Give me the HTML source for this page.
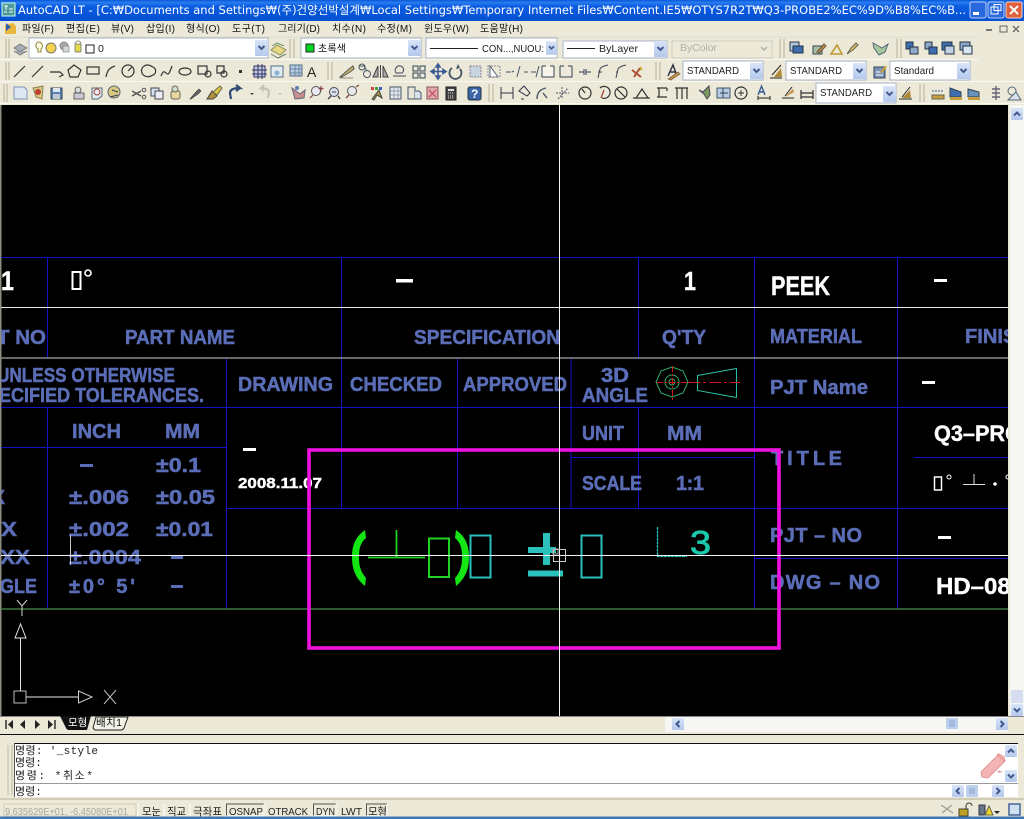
<!DOCTYPE html>
<html><head><meta charset="utf-8"><style>
html,body{margin:0;padding:0;background:#ece9d8;width:1024px;height:819px;overflow:hidden}
svg{display:block}
text{font-family:"Liberation Sans","Noto Sans CJK KR",sans-serif}
.b{font-weight:bold;fill:#5a6db6;font-size:20px;stroke:#5a6db6;stroke-width:.5px}
.w{font-weight:bold;fill:#fff;stroke:#fff;stroke-width:.4px}
.u{font-size:10px;fill:#111}
.c{font-family:"Liberation Mono","Noto Sans CJK KR",monospace;font-size:11px;fill:#222}
.s{font-size:10.5px;fill:#222}
.bl{stroke:#1414c4;stroke-width:1;fill:none}
.tk{fill:none;stroke:#333;stroke-width:1.2}
</style></head><body>
<svg width="1024" height="819" viewBox="0 0 1024 819" xmlns="http://www.w3.org/2000/svg">
<defs>
<linearGradient id="tg" x1="0" y1="0" x2="0" y2="1"><stop offset="0" stop-color="#0a58d8"/><stop offset=".12" stop-color="#2a7cf0"/><stop offset=".3" stop-color="#0a5ce2"/><stop offset="1" stop-color="#0450d0"/></linearGradient>
<linearGradient id="ar" x1="0" y1="0" x2="0" y2="1"><stop offset="0" stop-color="#d8e4f8"/><stop offset="1" stop-color="#b4c8ec"/></linearGradient>
<symbol id="dn" viewBox="0 0 13 16" overflow="visible"><rect x="0" y="0" width="13" height="16" rx="1" fill="url(#ar)"/><path d="M3.5 6l3 3 3-3" fill="none" stroke="#41598c" stroke-width="2"/></symbol>
<symbol id="up" viewBox="0 0 12 12"><rect width="12" height="12" rx="1" fill="url(#ar)"/><path d="M3 7.500l3-3 3 3" fill="none" stroke="#41598c" stroke-width="2"/></symbol>
<symbol id="dw" viewBox="0 0 12 12"><rect width="12" height="12" rx="1" fill="url(#ar)"/><path d="M3 4.500l3 3 3-3" fill="none" stroke="#41598c" stroke-width="2"/></symbol>
<symbol id="lf" viewBox="0 0 12 12"><rect width="12" height="12" rx="1" fill="url(#ar)"/><path d="M7.500 3l-3 3 3 3" fill="none" stroke="#41598c" stroke-width="2"/></symbol>
<symbol id="rt" viewBox="0 0 12 12"><rect width="12" height="12" rx="1" fill="url(#ar)"/><path d="M4.500 3l3 3-3 3" fill="none" stroke="#41598c" stroke-width="2"/></symbol>
<clipPath id="dc"><rect x="1" y="105" width="1007" height="611"/></clipPath>
</defs>

<!-- base -->
<rect width="1024" height="819" fill="#ece9d8"/>
<!-- title bar -->
<rect width="1024" height="21" fill="url(#tg)"/>
<rect x="2" y="3" width="13" height="13" fill="#4f9a9a" stroke="#cfe" stroke-width="1"/>
<path d="M4 6h4M6 6v4M9 9h4M9 12h4M4 12h3" stroke="#fff" stroke-width="1"/>
<text x="18" y="14" font-size="11.5" fill="#fff" textLength="948" lengthAdjust="spacingAndGlyphs" style="font-family:'DejaVu Sans','Noto Sans CJK KR',sans-serif">AutoCAD LT - [C:₩Documents and Settings₩(주)건양선박설계₩Local Settings₩Temporary Internet Files₩Content.IE5₩OTYS7R2T₩Q3-PROBE2%EC%9D%B8%EC%B...</text>
<rect x="970" y="2" width="16" height="16" rx="2" fill="#2a68e0" stroke="#b8d0f8"/><rect x="973" y="12" width="6" height="3" fill="#fff"/>
<rect x="988" y="2" width="16" height="16" rx="2" fill="#2a68e0" stroke="#b8d0f8"/><rect x="991" y="7" width="7" height="7" fill="none" stroke="#fff"/><rect x="994" y="4.500" width="7" height="6" fill="none" stroke="#fff"/>
<rect x="1006" y="2" width="16" height="16" rx="2" fill="#e0603c" stroke="#f8d0c0"/><path d="M1010 6l8 8M1018 6l-8 8" stroke="#fff" stroke-width="2"/>

<!-- menu -->
<path d="M5 25l8-2 3 3v8H5z" fill="#e8b83c"/><path d="M6 23l5 4-5 4z" fill="#3060b0"/>
<g class="u" font-size="10">
<text x="22" y="32" class="u" textLength="32">파일(F)</text>
<text x="66" y="32" class="u" textLength="34">편집(E)</text>
<text x="111" y="32" class="u" textLength="23">뷰(V)</text>
<text x="146" y="32" class="u" textLength="29">삽입(I)</text>
<text x="186" y="32" class="u" textLength="34">형식(O)</text>
<text x="232" y="32" class="u" textLength="33">도구(T)</text>
<text x="278" y="32" class="u" textLength="42">그리기(D)</text>
<text x="332" y="32" class="u" textLength="34">치수(N)</text>
<text x="377" y="32" class="u" textLength="35">수정(M)</text>
<text x="424" y="32" class="u" textLength="45">윈도우(W)</text>
<text x="480" y="32" class="u" textLength="43">도움말(H)</text>
</g>
<rect x="986" y="29" width="6" height="2" fill="#777"/><rect x="1000" y="26" width="7" height="6" fill="none" stroke="#666"/><path d="M1013 26l6 6M1019 26l-6 6" stroke="#666" stroke-width="1.300"/>

<!-- toolbar separators -->
<path d="M0 36.500H978M0 59.500H978M0 81.500H1024M0 103.500H1024" stroke="#f9f8f1"/>
<path d="M0 37H978" stroke="#d8d4c0"/>
<path d="M6 39v19M9 39v19M6 62v18M9 62v18M4 84v18M7 84v18M290 39v19M294 39v19M780 39v19M784 39v19M897 39v19M901 39v19M328 62v18M332 62v18M656 62v18M660 62v18M489 84v18M493 84v18M920 84v18M924 84v18" stroke="#bdb9a4" stroke-width="1.200"/>

<!-- Toolbar 1 -->
<path d="M14 48l6-4 7 4-7 4zM14 51l6 4 7-4" fill="#a6adb4" stroke="#777" stroke-width=".8"/>
<rect x="29" y="38" width="239" height="20" fill="#fff" stroke="#a8b4c8"/>
<use href="#dn" x="255" y="40" width="13" height="16"/>
<path d="M38 42a4 4 0 0 1 3 7v3h-3v-3a4 4 0 0 1 0-7z" fill="#fffbe0" stroke="#8a8a40"/>
<circle cx="51" cy="48" r="5" fill="#f4d44c" stroke="#777"/>
<circle cx="64" cy="46" r="4" fill="#aaa" stroke="#888"/><rect x="63" y="46" width="6" height="6" fill="#d0d8d8" stroke="#888" stroke-width=".7"/>
<rect x="75" y="44" width="6" height="8" rx="1" fill="#e6d84c" stroke="#887"/><path d="M75 44a3 3 0 0 1 6 0" fill="none" stroke="#887"/>
<rect x="86" y="45" width="8" height="8" fill="#fff" stroke="#222"/>
<text x="98" y="52" class="s" font-size="11">0</text>
<path d="M271 50l6-5 9 5-6 5z" fill="#e8d880" stroke="#8a9060"/><path d="M272 46l5-3 7 3" fill="none" stroke="#6a9060"/><path d="M271 54l7 4 8-4" fill="none" stroke="#6a8060"/>

<rect x="301" y="38" width="120" height="20" fill="#fff" stroke="#a8b4c8"/>
<rect x="306" y="44" width="8" height="8" fill="#00d820" stroke="#222"/>
<text x="318" y="52" class="u" textLength="28">초록색</text>
<use href="#dn" x="408" y="40" width="13" height="16"/>

<rect x="426" y="38" width="131" height="20" fill="#fff" stroke="#a8b4c8"/>
<path d="M430 48.500H478" stroke="#222"/>
<text x="482" y="52" class="s" textLength="62" lengthAdjust="spacingAndGlyphs">CON...,NUOU:</text>
<use href="#dn" x="546" y="40" width="11" height="16"/>

<rect x="563" y="41" width="104" height="17" fill="#fff" stroke="#a8b4c8"/>
<path d="M567 48.500H595" stroke="#222"/>
<text x="599" y="52" class="s" textLength="39" lengthAdjust="spacingAndGlyphs">ByLayer</text>
<use href="#dn" x="654" y="41" width="13" height="16"/>

<rect x="672" y="41" width="100" height="17" fill="#ece9d8" stroke="#cfcdbe"/>
<text x="680" y="51" class="s" style="fill:#b0b0a4" textLength="37">ByColor</text>
<path d="M761 47l3 3 3-3" fill="none" stroke="#b0b0a4" stroke-width="1.500"/>

<rect x="790" y="42" width="9" height="9" fill="#b0c8e0" stroke="#334"/><rect x="793" y="46" width="10" height="7" fill="#3f6eb0" stroke="#234"/>
<rect x="813" y="46" width="9" height="8" fill="#a8c0a0" stroke="#345"/><path d="M817 52l7-8 2 2-7 7z" fill="#c89040" stroke="#654"/>
<path d="M831 54l6-9 5 9z" fill="none" stroke="#c09a30" stroke-width="1.600"/><path d="M847 54l4-6 5-5 2 2-5 5z" fill="#d8b860" stroke="#665"/>
<path d="M873 43l9 5 6-4-3 8-6 3-5-7z" fill="#a8c8a0" stroke="#567"/>
<rect x="906" y="42" width="7" height="7" fill="#3f6eb0" stroke="#234"/><rect x="910" y="47" width="8" height="7" fill="#90a8c8" stroke="#234"/>
<rect x="925" y="42" width="7" height="7" fill="#90a8c8" stroke="#234"/><rect x="929" y="47" width="8" height="7" fill="#3f6eb0" stroke="#234"/>
<rect x="942" y="42" width="10" height="8" fill="#3f6eb0" stroke="#234"/><rect x="945" y="46" width="9" height="8" fill="#c0d0e0" stroke="#234"/>
<rect x="960" y="42" width="10" height="8" fill="#90a8c8" stroke="#234"/><rect x="963" y="46" width="9" height="8" fill="#d8e4f0" stroke="#234"/>

<!-- Toolbar 2 -->
<g class="tk">
<path d="M14 77l11-11M32 77l11-11M50 72h10l3 3-4 2"/>
<path d="M74 65l7 5-3 7h-8l-2-7z"/>
<rect x="87" y="67" width="12" height="7"/>
<path d="M106 77c1-6 3-9 9-11"/>
<circle cx="128" cy="71" r="6"/><path d="M128 71l4-4"/>
<path d="M143 67c4-4 8-1 10 0 4 2 3 7 0 8-3 2-6 2-8 1-3-1-5-6-2-9z"/>
<path d="M161 76c2-5 3-5 5-3s3 2 6-7"/>
<ellipse cx="185" cy="71.500" rx="6" ry="3.500"/>
<rect x="198" y="66" width="9" height="8"/><circle cx="208" cy="74" r="3"/>
<path d="M217 66h7v7h-7z"/><circle cx="224" cy="74" r="3"/>
</g>
<rect x="239" y="70" width="3" height="3" fill="#333"/>
<rect x="254" y="66" width="11" height="11" fill="#c0ccdc" stroke="#336"/><path d="M252 70h15M252 74h15M258 64v15M262 64v15" stroke="#336"/>
<rect x="271" y="66" width="12" height="11" fill="#e0ecf0" stroke="#58708c"/><circle cx="277" cy="73" r="2.500" fill="#90b0d0"/>
<rect x="290" y="65" width="12" height="11" fill="#b8cce4" stroke="#58708c"/><path d="M290 69h12M290 73h12M295 65v11M299 65v11" stroke="#58708c" stroke-width=".7"/>
<text x="307" y="77" font-size="14" fill="#222" style="font-family:'Liberation Sans'">A</text>

<path d="M340 77l9-8 4-3 1 3-4 3-8 5z" fill="#c8b870" stroke="#555"/><path d="M340 78h13" stroke="#888"/>
<circle cx="362" cy="67" r="3" fill="none" stroke="#456"/><circle cx="367" cy="74" r="3.500" fill="none" stroke="#456"/><path d="M359 66h5l3 5" stroke="#456" fill="none"/>
<path d="M378 66v11h-5zM383 66v11h5zM380.500 65v13" fill="#aaa" stroke="#444"/>
<path d="M396 68a4 4 0 1 1 6 5h-6a4 4 0 0 1 0-5zM393 76h13" fill="none" stroke="#445"/>
<rect x="413" y="66" width="5" height="5" fill="none" stroke="#345"/><rect x="420" y="66" width="5" height="5" fill="none" stroke="#345"/><rect x="413" y="73" width="5" height="5" fill="none" stroke="#345"/><rect x="420" y="73" width="5" height="5" fill="none" stroke="#345"/>
<path d="M438 65v13M432 71.500h13M438 64l-2 3h4zM438 79l-2-3h4zM431 71.500l3-2v4zM446 71.500l-3-2v4z" stroke="#3a5a94" fill="#3a5a94" stroke-width="1.600"/>
<path d="M452 68a6 6 0 1 0 8 1" fill="none" stroke="#456" stroke-width="1.800"/><path d="M458 64l2 4-4 1z" fill="#456"/>
<rect x="470" y="66" width="11" height="11" fill="#c8d4e0" stroke="#889" stroke-dasharray="2 1"/>
<path d="M490 66v11h8z" fill="#fff" stroke="#567"/><rect x="488" y="66" width="12" height="11" fill="none" stroke="#889" stroke-dasharray="2 1"/>
<path d="M506 72h5M514 71l-2 1M520 66l-3 11" stroke="#456" fill="none"/><path d="M524 72h4M531 72h5M539 66l-3 11" stroke="#456" fill="none"/>
<path d="M542 66v11h12v-11" fill="#f8f4ea" stroke="#345"/><path d="M542 66h4M550 66h4" stroke="#345"/>
<path d="M560 66v11h12v-11M560 66h4M568 66h4" fill="none" stroke="#345"/>
<path d="M579 72h5M591 72h-5M584 69v6M586 69v6" stroke="#345" fill="none"/>
<path d="M598 78l2-9c1-2 3-3 8-4M598 72h4" fill="none" stroke="#445"/>
<path d="M616 78l2-9c1-2 3-3 8-4M616 72h2" fill="none" stroke="#445"/>
<path d="M634 77l6-9M632 70l9 7" stroke="#b05030" stroke-width="2"/><path d="M640 66l3 3-3 2" fill="#c8b040"/>

<path d="M668 76l5-11 4 11M670 72h6" fill="none" stroke="#334" stroke-width="1.500"/><path d="M668 79l10-7 2 2-9 6z" fill="#c09040" stroke="#654" stroke-width=".6"/>
<rect x="683" y="61" width="80" height="19" fill="#fff" stroke="#a8b4c8"/>
<text x="687" y="74" class="s" textLength="52" lengthAdjust="spacingAndGlyphs">STANDARD</text>
<use href="#dn" x="750" y="63" width="13" height="16"/>
<path d="M770 78h12M781 65l-9 10" stroke="#222"/><path d="M774 77l7-9 1 9z" fill="#b08a3c"/>
<rect x="786" y="61" width="80" height="19" fill="#fff" stroke="#a8b4c8"/>
<text x="790" y="74" class="s" textLength="52" lengthAdjust="spacingAndGlyphs">STANDARD</text>
<use href="#dn" x="853" y="63" width="13" height="16"/>
<rect x="874" y="67" width="11" height="11" fill="#7a92b4" stroke="#345"/><path d="M876 72h7M876 75h7" stroke="#fff"/><path d="M880 72l5-6 2 1-5 6z" fill="#c8a040"/>
<rect x="890" y="61" width="80" height="19" fill="#fff" stroke="#a8b4c8"/>
<text x="894" y="74" class="s" textLength="40" lengthAdjust="spacingAndGlyphs">Standard</text>
<use href="#dn" x="957" y="63" width="13" height="16"/>

<!-- Toolbar 3 -->
<path d="M14 87h10l3 3v9H14z" fill="#dfe8f2" stroke="#7c94b4"/>
<path d="M33 88l10-2-1 13-6-2z" fill="#d8c880" stroke="#8a8050"/><circle cx="38" cy="92" r="3" fill="#c04030"/>
<rect x="51" y="88" width="11" height="11" fill="#5a80b4" stroke="#345"/><rect x="53" y="88" width="7" height="4" fill="#e0e8f0"/><rect x="53" y="94" width="7" height="5" fill="#c0c8d0"/>
<circle cx="78" cy="90" r="3" fill="#ddd" stroke="#666"/><rect x="74" y="93" width="10" height="6" fill="#c8c8d0" stroke="#666"/>
<path d="M92 88h10v8l-4 3h-6z" fill="#e4ecf4" stroke="#567"/><circle cx="97" cy="92" r="3" fill="none" stroke="#a04030"/>
<circle cx="114" cy="92" r="6" fill="#d8c880" stroke="#567"/><path d="M110 97l8-2M112 90l6 2" stroke="#345"/>
<path d="M132 91l9 5M132 96l9-5" stroke="#555" stroke-width="1.400"/><circle cx="144" cy="90" r="1.800" fill="none" stroke="#555"/><circle cx="144" cy="97" r="1.800" fill="none" stroke="#555"/>
<rect x="151" y="88" width="8" height="8" fill="#d8e4f0" stroke="#445"/><rect x="155" y="91" width="8" height="8" fill="#e8eef4" stroke="#445"/>
<rect x="171" y="91" width="9" height="8" rx="2" fill="#e8d8a0" stroke="#665"/><circle cx="175" cy="89" r="3" fill="#cfe0c8" stroke="#665"/>
<path d="M190 99l6-7 3-3 2 2-3 3-7 5z" fill="#666" stroke="#333" stroke-width=".6"/>
<path d="M207 99l5-8 5 5-4 3z" fill="#b09040" stroke="#444"/><path d="M213 92l7-6 2 2-5 7z" fill="#e0c840" stroke="#665"/>
<path d="M231 99l-1-6c0-3 3-5 10-5l-4-3M240 88l-4 3" fill="none" stroke="#2c4a74" stroke-width="2.200"/>
<path d="M250 93h4l-2 2z" fill="#444"/>
<path d="M268 98l1-6c0-2-3-4-8-4l3-3M261 88l3 3" fill="none" stroke="#c4c4b8" stroke-width="2.200"/>
<path d="M278 93h4l-2 2z" fill="#bbb"/>
<path d="M292 88l8 6 5-4-1 8-9 1z" fill="#c89090" stroke="#667"/><circle cx="297" cy="88" r="2" fill="#5a80b4"/>
<circle cx="316" cy="91" r="4.500" fill="#e8e8f0" stroke="#555"/><path d="M313 95l-3 3M321 86v5M318.500 88.500h5" stroke="#844" stroke-width="1.200"/>
<circle cx="334" cy="92" r="4.500" fill="#d8e0ec" stroke="#445"/><path d="M331 96l-3 3M338 96l2 3" stroke="#344" stroke-width="1.300"/><path d="M332 92h4" stroke="#445"/>
<circle cx="352" cy="91" r="4.500" fill="#e8e8f0" stroke="#555"/><path d="M349 95l-3 3M356 87l3-2" stroke="#844" stroke-width="1.300"/>
<rect x="371" y="87" width="3" height="3" fill="#d04040"/><rect x="375" y="87" width="3" height="3" fill="#40a040"/><rect x="379" y="87" width="3" height="3" fill="#4060c0"/><path d="M372 99l7-9 3 8-5-3-3 5z" fill="#a09050" stroke="#444"/>
<rect x="390" y="87" width="11" height="12" fill="#e8ecf0" stroke="#456"/><path d="M390 91h11M390 95h11M394 87v12M398 87v12" stroke="#789" stroke-width=".7"/>
<rect x="408" y="87" width="7" height="12" fill="#e8e4d8" stroke="#456"/><path d="M415 91h4l2 2v6h-6" fill="#d8e0ec" stroke="#456"/>
<rect x="427" y="87" width="11" height="12" fill="#e0a8b0" stroke="#855"/><path d="M429 90l7 7M436 90l-7 7" stroke="#c04050"/>
<rect x="446" y="87" width="10" height="13" fill="#444" stroke="#222"/><rect x="448" y="89" width="6" height="2" fill="#ddd"/><path d="M448 93h6M448 96h6M448 98h6" stroke="#ddd" stroke-dasharray="1 1"/>
<rect x="468" y="87" width="13" height="13" rx="2" fill="#3a66a8" stroke="#234"/><text x="471" y="98" font-size="12" font-weight="bold" fill="#fff" style="font-family:'Liberation Sans'">?</text>

<path d="M501 87v12M513 87v12M501 93h12" stroke="#334" fill="none"/>
<path d="M519 91l5-5 6 7-3 3z M521 99h3" fill="none" stroke="#334"/>
<path d="M537 99c0-7 4-10 9-11M543 93l4 5" fill="none" stroke="#456" stroke-width="1.400"/>
<path d="M556 93h13M562 87v12M558 99l10-11" stroke="#556" stroke-dasharray="2 1" fill="none"/>
<circle cx="585" cy="93" r="6" class="tk"/><path d="M585 93l-3-4" class="tk"/>
<path d="M600 88a6 6 0 1 1 2 10" class="tk"/><path d="M604 90l-3 8" stroke="#a04030" stroke-width="1.300"/>
<circle cx="621" cy="93" r="6" class="tk"/><path d="M617 89l8 8" class="tk"/>
<path d="M636 98h12l-6-9zM633 98h17" class="tk"/>
<path d="M657 88h10M657 97h10M659 88v9M667 88v3" class="tk"/>
<path d="M675 88h13M677 88v11M682 88v11M687 88v11" class="tk"/>
<path d="M699 90l4 2 6-6 1 9-3 4-3-5z" fill="#7a9a60" stroke="#445"/>
<rect x="717" y="88" width="13" height="10" fill="#b8cce4" stroke="#456"/><path d="M723 88v10M720 93h8" stroke="#345"/>
<circle cx="741" cy="93" r="6" class="tk"/><path d="M738 93h6M741 90v6" stroke="#333"/>
<path d="M758 95l3.500-9 3.500 9M759.500 92h5" fill="none" stroke="#3a5a94" stroke-width="1.400"/><path d="M758 98h12M758 96v4M770 96v4" stroke="#222"/>
<path d="M782 98h12M792 87l-7 9" stroke="#222"/><path d="M785 97l8-8 1 3z" fill="#c09040"/>
<path d="M801 90v9M813 90v9M801 93h12M801 97h12" class="tk"/>
<rect x="816" y="83" width="80" height="20" fill="#fff" stroke="#a8b4c8"/>
<text x="820" y="96" class="s" textLength="52" lengthAdjust="spacingAndGlyphs">STANDARD</text>
<use href="#dn" x="883" y="86" width="13" height="16"/>
<path d="M899 99h13M910 87l-8 10" stroke="#222"/><path d="M902 98l8-8 1 8z" fill="#b08a3c"/>
<path d="M932 91h12" stroke="#3a5a94" stroke-dasharray="2 1"/><rect x="932" y="95" width="12" height="4" fill="#c8a040" stroke="#665"/>
<path d="M950 88l11 4v5h-11z" fill="#3f6eb0" stroke="#345"/><rect x="950" y="97" width="12" height="3" fill="#c8a040"/>
<path d="M968 89l11 3v5h-11z" fill="#6a90bc" stroke="#345"/><rect x="968" y="97" width="12" height="3" fill="#c8a040"/>
<path d="M992 89h8M992 93h8M992 97h8M996 86v14" stroke="#667" stroke-width="1.400"/>
<circle cx="1012" cy="91" r="4" fill="none" stroke="#567"/><path d="M1008 100l8-8 5 8z" fill="#d8e4f0" stroke="#567"/>

<!-- drawing area -->
<rect x="0" y="105" width="1008" height="611" fill="#000"/>
<rect x="0" y="105" width="1.500" height="611" fill="#8e8c80"/>
<g clip-path="url(#dc)">
<path class="bl" d="M1 257.500H1008M47.500 257V358M341.500 257V508M638.500 257V358M754.500 257V609M897.500 257V609M1 407.500H1008M226.500 358V609M457.500 358V508M571 358V508M638.500 408V508M47.500 407V609M1 447.500H226M226 508.500H1008M571 457.500H754M914 457.500H1008M754 558.500H1008"/>
<path d="M1 307.500H1008" stroke="#e8e8e8"/>
<path d="M1 358H1008" stroke="#8a8a8a" stroke-width="1.500"/>
<path d="M1 609H1008" stroke="#3f7a3a" stroke-width="1.400"/>

<!-- white text -->
<text x="1" y="290" class="w" style="font-size:27px" textLength="13" lengthAdjust="spacingAndGlyphs">1</text>
<rect x="72.500" y="272" width="8" height="17" fill="none" stroke="#fff" stroke-width="2"/>
<circle cx="88" cy="273" r="3" fill="none" stroke="#fff" stroke-width="1.600"/>
<rect x="396" y="279" width="17" height="3.500" fill="#fff"/>
<text x="684" y="290" class="w" style="font-size:26px" textLength="12" lengthAdjust="spacingAndGlyphs">1</text>
<text x="771" y="295" class="w" style="font-size:27px" textLength="59" lengthAdjust="spacingAndGlyphs">PEEK</text>
<rect x="934" y="279" width="13" height="3" fill="#fff"/>
<rect x="922" y="381" width="13" height="3" fill="#fff"/>
<rect x="243" y="448" width="13" height="3" fill="#fff"/>
<text x="238" y="488" class="w" style="font-size:14.500px" textLength="84" lengthAdjust="spacingAndGlyphs">2008.11.07</text>
<text x="934" y="441" class="w" style="font-size:22px" textLength="118" lengthAdjust="spacingAndGlyphs">Q3–PROBE</text>
<rect x="938" y="536" width="13" height="3" fill="#fff"/>
<text x="936" y="594" class="w" style="font-size:23px" textLength="88" lengthAdjust="spacingAndGlyphs">HD–085</text>
<rect x="934.500" y="477" width="7" height="13" fill="none" stroke="#fff" stroke-width="1.500"/>
<circle cx="949" cy="477" r="2" fill="none" stroke="#fff"/>
<path d="M963 484.500H985M974 474V484" stroke="#ddd"/>
<circle cx="995" cy="484" r="1.800" fill="#fff"/>
<circle cx="1008" cy="477" r="2" fill="none" stroke="#fff"/>

<!-- blue text -->
<text x="-3" y="344" class="b" textLength="49" lengthAdjust="spacingAndGlyphs">T NO</text>
<text x="125" y="344" class="b" textLength="110" lengthAdjust="spacingAndGlyphs">PART NAME</text>
<text x="414" y="344" class="b" textLength="146" lengthAdjust="spacingAndGlyphs">SPECIFICATION</text>
<text x="662" y="344" class="b" textLength="44" lengthAdjust="spacingAndGlyphs">Q'TY</text>
<text x="770" y="343" class="b" textLength="92" lengthAdjust="spacingAndGlyphs">MATERIAL</text>
<text x="965" y="343" class="b" textLength="66" lengthAdjust="spacingAndGlyphs">FINISH</text>
<text x="-3" y="382" class="b" textLength="178" lengthAdjust="spacingAndGlyphs">UNLESS OTHERWISE</text>
<text x="-1" y="402" class="b" textLength="205" lengthAdjust="spacingAndGlyphs">ECIFIED TOLERANCES.</text>
<text x="238" y="391" class="b" textLength="95" lengthAdjust="spacingAndGlyphs">DRAWING</text>
<text x="350" y="391" class="b" textLength="92" lengthAdjust="spacingAndGlyphs">CHECKED</text>
<text x="463" y="391" class="b" textLength="104" lengthAdjust="spacingAndGlyphs">APPROVED</text>
<text x="601" y="382" class="b" textLength="28" lengthAdjust="spacingAndGlyphs">3D</text>
<text x="582" y="402" class="b" textLength="66" lengthAdjust="spacingAndGlyphs">ANGLE</text>
<text x="770" y="394" class="b" textLength="98" lengthAdjust="spacingAndGlyphs">PJT Name</text>
<text x="72" y="438" class="b" textLength="49" lengthAdjust="spacingAndGlyphs">INCH</text>
<text x="165" y="438" class="b" textLength="35" lengthAdjust="spacingAndGlyphs">MM</text>
<text x="582" y="440" class="b" textLength="42" lengthAdjust="spacingAndGlyphs">UNIT</text>
<text x="667" y="440" class="b" textLength="35" lengthAdjust="spacingAndGlyphs">MM</text>
<text x="771" y="465" class="b" textLength="71">T I T L E</text>
<rect x="80" y="464" width="13" height="3" fill="#5a6db6"/>
<text x="156" y="472" class="b" textLength="45" lengthAdjust="spacingAndGlyphs">±0.1</text>
<text x="-8" y="504" class="b" textLength="13" lengthAdjust="spacingAndGlyphs">X</text>
<text x="69" y="504" class="b" textLength="60" lengthAdjust="spacingAndGlyphs">±.006</text>
<text x="156" y="504" class="b" textLength="59" lengthAdjust="spacingAndGlyphs">±0.05</text>
<text x="1" y="536" class="b" textLength="16" lengthAdjust="spacingAndGlyphs">X</text>
<text x="69" y="536" class="b" textLength="60" lengthAdjust="spacingAndGlyphs">±.002</text>
<text x="156" y="536" class="b" textLength="57" lengthAdjust="spacingAndGlyphs">±0.01</text>
<text x="0" y="564" class="b" textLength="30" lengthAdjust="spacingAndGlyphs">XX</text>
<text x="69" y="564" class="b" textLength="72" lengthAdjust="spacingAndGlyphs">±.0004</text>
<rect x="171" y="556" width="12" height="3" fill="#5a6db6"/>
<text x="0" y="593" class="b" textLength="37" lengthAdjust="spacingAndGlyphs">GLE</text>
<text x="69" y="593" class="b" textLength="66" xml:space="preserve">±0° 5'</text>
<rect x="171" y="585" width="12" height="3" fill="#5a6db6"/>
<text x="582" y="490" class="b" textLength="60" lengthAdjust="spacingAndGlyphs">SCALE</text>
<text x="676" y="490" class="b" textLength="28">1:1</text>
<text x="770" y="542" class="b" textLength="92">PJT – NO</text>
<text x="770" y="589" class="b" textLength="110">DWG – NO</text>

<!-- 3D angle symbol -->
<path d="M672 367l11 4 5 11-5 11-11 4-11-4-5-11 5-11z" fill="none" stroke="#2fae6a"/>
<circle cx="672" cy="382" r="7" fill="none" stroke="#2fae6a"/>
<circle cx="672" cy="382" r="3" fill="none" stroke="#2fae6a"/>
<path d="M657 382.500H688M672.500 366V402" stroke="#d01818" stroke-dasharray="6 2 2 2"/>
<path d="M697.500 375.500L736.500 368.500V397.500L697.500 390.500z" fill="none" stroke="#28c0a0"/>
<path d="M688 382.500H740" stroke="#d01818" stroke-dasharray="12 3 3 3"/>

<!-- small marker -->
<path d="M70.500 535V565" stroke="#c8c8c8"/>

<!-- green -->
<path d="M365 530c-10 7-13 16-13 27 0 11 3 21 13 29l1-8c-6-7-7-13-7-21 0-8 1-14 7-19z" fill="#14e614"/>
<path d="M456 530c10 7 13 16 13 27 0 11-3 21-13 29l-1-8c6-7 7-13 7-21 0-8-1-14-7-19z" fill="#14e614"/>
<path d="M368 557.500H425M396.500 530V558" stroke="#22d422" stroke-width="1.800" fill="none"/>
<rect x="429" y="538.500" width="20" height="38.500" fill="none" stroke="#22d422" stroke-width="2"/>

<!-- teal -->
<g fill="none" stroke="#2ac0bc">
<rect x="470.500" y="535.500" width="20" height="42" stroke-width="2"/>
<rect x="581.500" y="535.500" width="20" height="42" stroke-width="2"/>
<path d="M546.500 533V565" stroke-width="7"/>
<path d="M528 550H556" stroke-width="6"/>
<path d="M528 573.500H563" stroke-width="6"/>
<path d="M657.500 527V556.500H687" stroke-width="1.300" stroke-dasharray="3 .6"/>
</g>
<text x="690" y="554" font-size="33" fill="#1cc8ac" stroke="#1cc8ac" stroke-width=".8" style="font-family:'Liberation Sans'" textLength="21" lengthAdjust="spacingAndGlyphs">3</text>

<!-- magenta rect -->
<rect x="309" y="450" width="470" height="198" fill="none" stroke="#f010e0" stroke-width="3.600"/>

<!-- crosshair -->
<path d="M1 555.500H1008M559.500 105V716" stroke="#f4f4f4"/>
<rect x="553.500" y="549.500" width="12" height="12" fill="none" stroke="#c8c8c8"/>
<rect x="553" y="549" width="5" height="5" fill="none" stroke="#aaa"/>

<!-- UCS -->
<path d="M17 600l5 6 5-6M22 606V616" fill="none" stroke="#cfcfcf"/>
<path d="M20.500 624L15 638H26zM20.500 638V691" fill="none" stroke="#e4e4e4"/>
<rect x="14" y="691" width="12" height="12" fill="none" stroke="#bbb"/>
<path d="M26 697H78" stroke="#bbb" stroke-width="1.200"/>
<path d="M78.500 691V703L92 697z" fill="none" stroke="#ccc"/>
<path d="M104 690l12 14M116 690l-12 14" stroke="#bbb"/>
</g>

<!-- right scrollbar -->
<rect x="1008" y="105" width="16" height="611" fill="#f6f6f4"/>
<rect x="1008" y="105" width="2" height="611" fill="#ece9d8"/>
<use href="#up" x="1011" y="108" width="12" height="12"/>
<rect x="1011" y="690" width="12" height="13" fill="#d4def0"/>
<use href="#dw" x="1011" y="704" width="12" height="12"/>

<!-- tabs row -->
<rect x="0" y="716" width="1024" height="1" fill="#888"/>
<path d="M6 720v9" stroke="#222" stroke-width="1.400"/><path d="M13 720l-5 4.500 5 4.500zM25 720l-5 4.500 5 4.500zM35 720l5 4.500-5 4.500zM48 720l5 4.500-5 4.500z" fill="#222"/><path d="M55 720v9" stroke="#222" stroke-width="1.400"/>
<path d="M60 716l6 12q1 2 3 2h18l4-14z" fill="#111"/>
<text x="68" y="726" font-size="10.500" fill="#fff">모형</text>
<path d="M93 728l3-11h32l-4 11q-1 2-3 2H95z" fill="#f4f3ea" stroke="#222"/>
<text x="96" y="726" font-size="10.500" fill="#111" textLength="26">배치1</text>
<rect x="665" y="717" width="343" height="15" fill="#f6f6f2"/>
<use href="#lf" x="672" y="718" width="12" height="12"/>
<rect x="946" y="718" width="12" height="11" rx="1" fill="#bcd0ee"/><path d="M950 720v7M952 720v7M954 720v7" stroke="#8aa2c8"/>
<use href="#rt" x="996" y="718" width="12" height="12"/>

<!-- black separator -->
<rect x="0" y="734" width="1024" height="1" fill="#111"/>
<path d="M8 745v50M12 745v50" stroke="#bdb9a4"/>

<!-- command window -->
<rect x="14" y="743" width="1004" height="54" fill="#fff"/>
<rect x="14" y="743" width="1004" height="1" fill="#111"/>
<rect x="14" y="743" width="1" height="54" fill="#555"/>
<rect x="15" y="783" width="1003" height="1" fill="#9a9a9a"/>
<text x="15" y="754" class="c" xml:space="preserve" textLength="83">명령: '_style</text>
<text x="15" y="766" class="c">명령:</text>
<text x="15" y="779" class="c" textLength="78">명령: *취소*</text>
<text x="15" y="795" class="c">명령:</text>
<use href="#up" x="1005" y="745" width="12" height="12"/>
<use href="#dw" x="1005" y="770" width="12" height="12"/>
<use href="#lf" x="952" y="785" width="12" height="12"/>
<rect x="966" y="785" width="12" height="12" rx="1" fill="#bcd0ee"/><path d="M970 788v6M972 788v6M974 788v6" stroke="#8aa2c8"/>
<use href="#rt" x="992" y="785" width="12" height="12"/>
<path d="M982 777l-1-5 18-18 5 3 1 4-17 17z" fill="#f4b4b4" stroke="#e09494"/><path d="M997 754l7 7" stroke="#e88"/><path d="M998 770l5 2-5 1z" fill="#e0a8a8"/>

<!-- status bar -->
<rect x="0" y="798" width="1024" height="2" fill="#cfccb8"/>
<rect x="4" y="804" width="132" height="12" fill="#ece9d8" stroke="#d0cdbc"/>
<text x="5" y="815" font-size="10" style="fill:#a8a89c" textLength="123" lengthAdjust="spacingAndGlyphs">9.635629E+01, -6.45080E+01</text>
<g font-size="10.500" fill="#222">
<text x="142" y="815" textLength="19">모눈</text>
<text x="167" y="815" textLength="19">직교</text>
<text x="193" y="815" textLength="29">극좌표</text>
<text x="229" y="815" textLength="34" lengthAdjust="spacingAndGlyphs">OSNAP</text>
<text x="268" y="815" textLength="40" lengthAdjust="spacingAndGlyphs">OTRACK</text>
<text x="316" y="815" textLength="19" lengthAdjust="spacingAndGlyphs">DYN</text>
<text x="341" y="815" textLength="21" lengthAdjust="spacingAndGlyphs">LWT</text>
<text x="368" y="815" textLength="19">모형</text>
</g>
<path d="M138 804v12M164 804v12M190 804v12" stroke="#fff"/>
<path d="M226.500 816v-12H264M313.500 816v-12H336M366.500 816v-12H387" fill="none" stroke="#555"/>
<path d="M264 804v12M336 804v12M387 804v12M226 816h38M313 816h23M366 816h21" stroke="#fbfaf3"/>
<path d="M941 805l12 8M952 805l-10 8" stroke="#a0a098" stroke-width="1.300"/>
<rect x="959" y="809" width="9" height="7" fill="#c0a020" stroke="#443"/><path d="M966 809v-3a3 3 0 0 1 6 0" fill="none" stroke="#333"/>
<rect x="979" y="805" width="6" height="10" fill="#678" stroke="#334"/><path d="M985 815l4-9 4 9z" fill="#f0d820" stroke="#665"/>
<path d="M994 811h6l-3 3z" fill="#222"/>
<rect x="1009" y="804" width="11" height="11" fill="#cfe0f0" stroke="#3a5a94" stroke-width="1.400"/>

<!-- desktop edge -->
<rect x="0" y="816.500" width="1024" height="2.500" fill="#3f78b8"/>
</svg>
</body></html>
